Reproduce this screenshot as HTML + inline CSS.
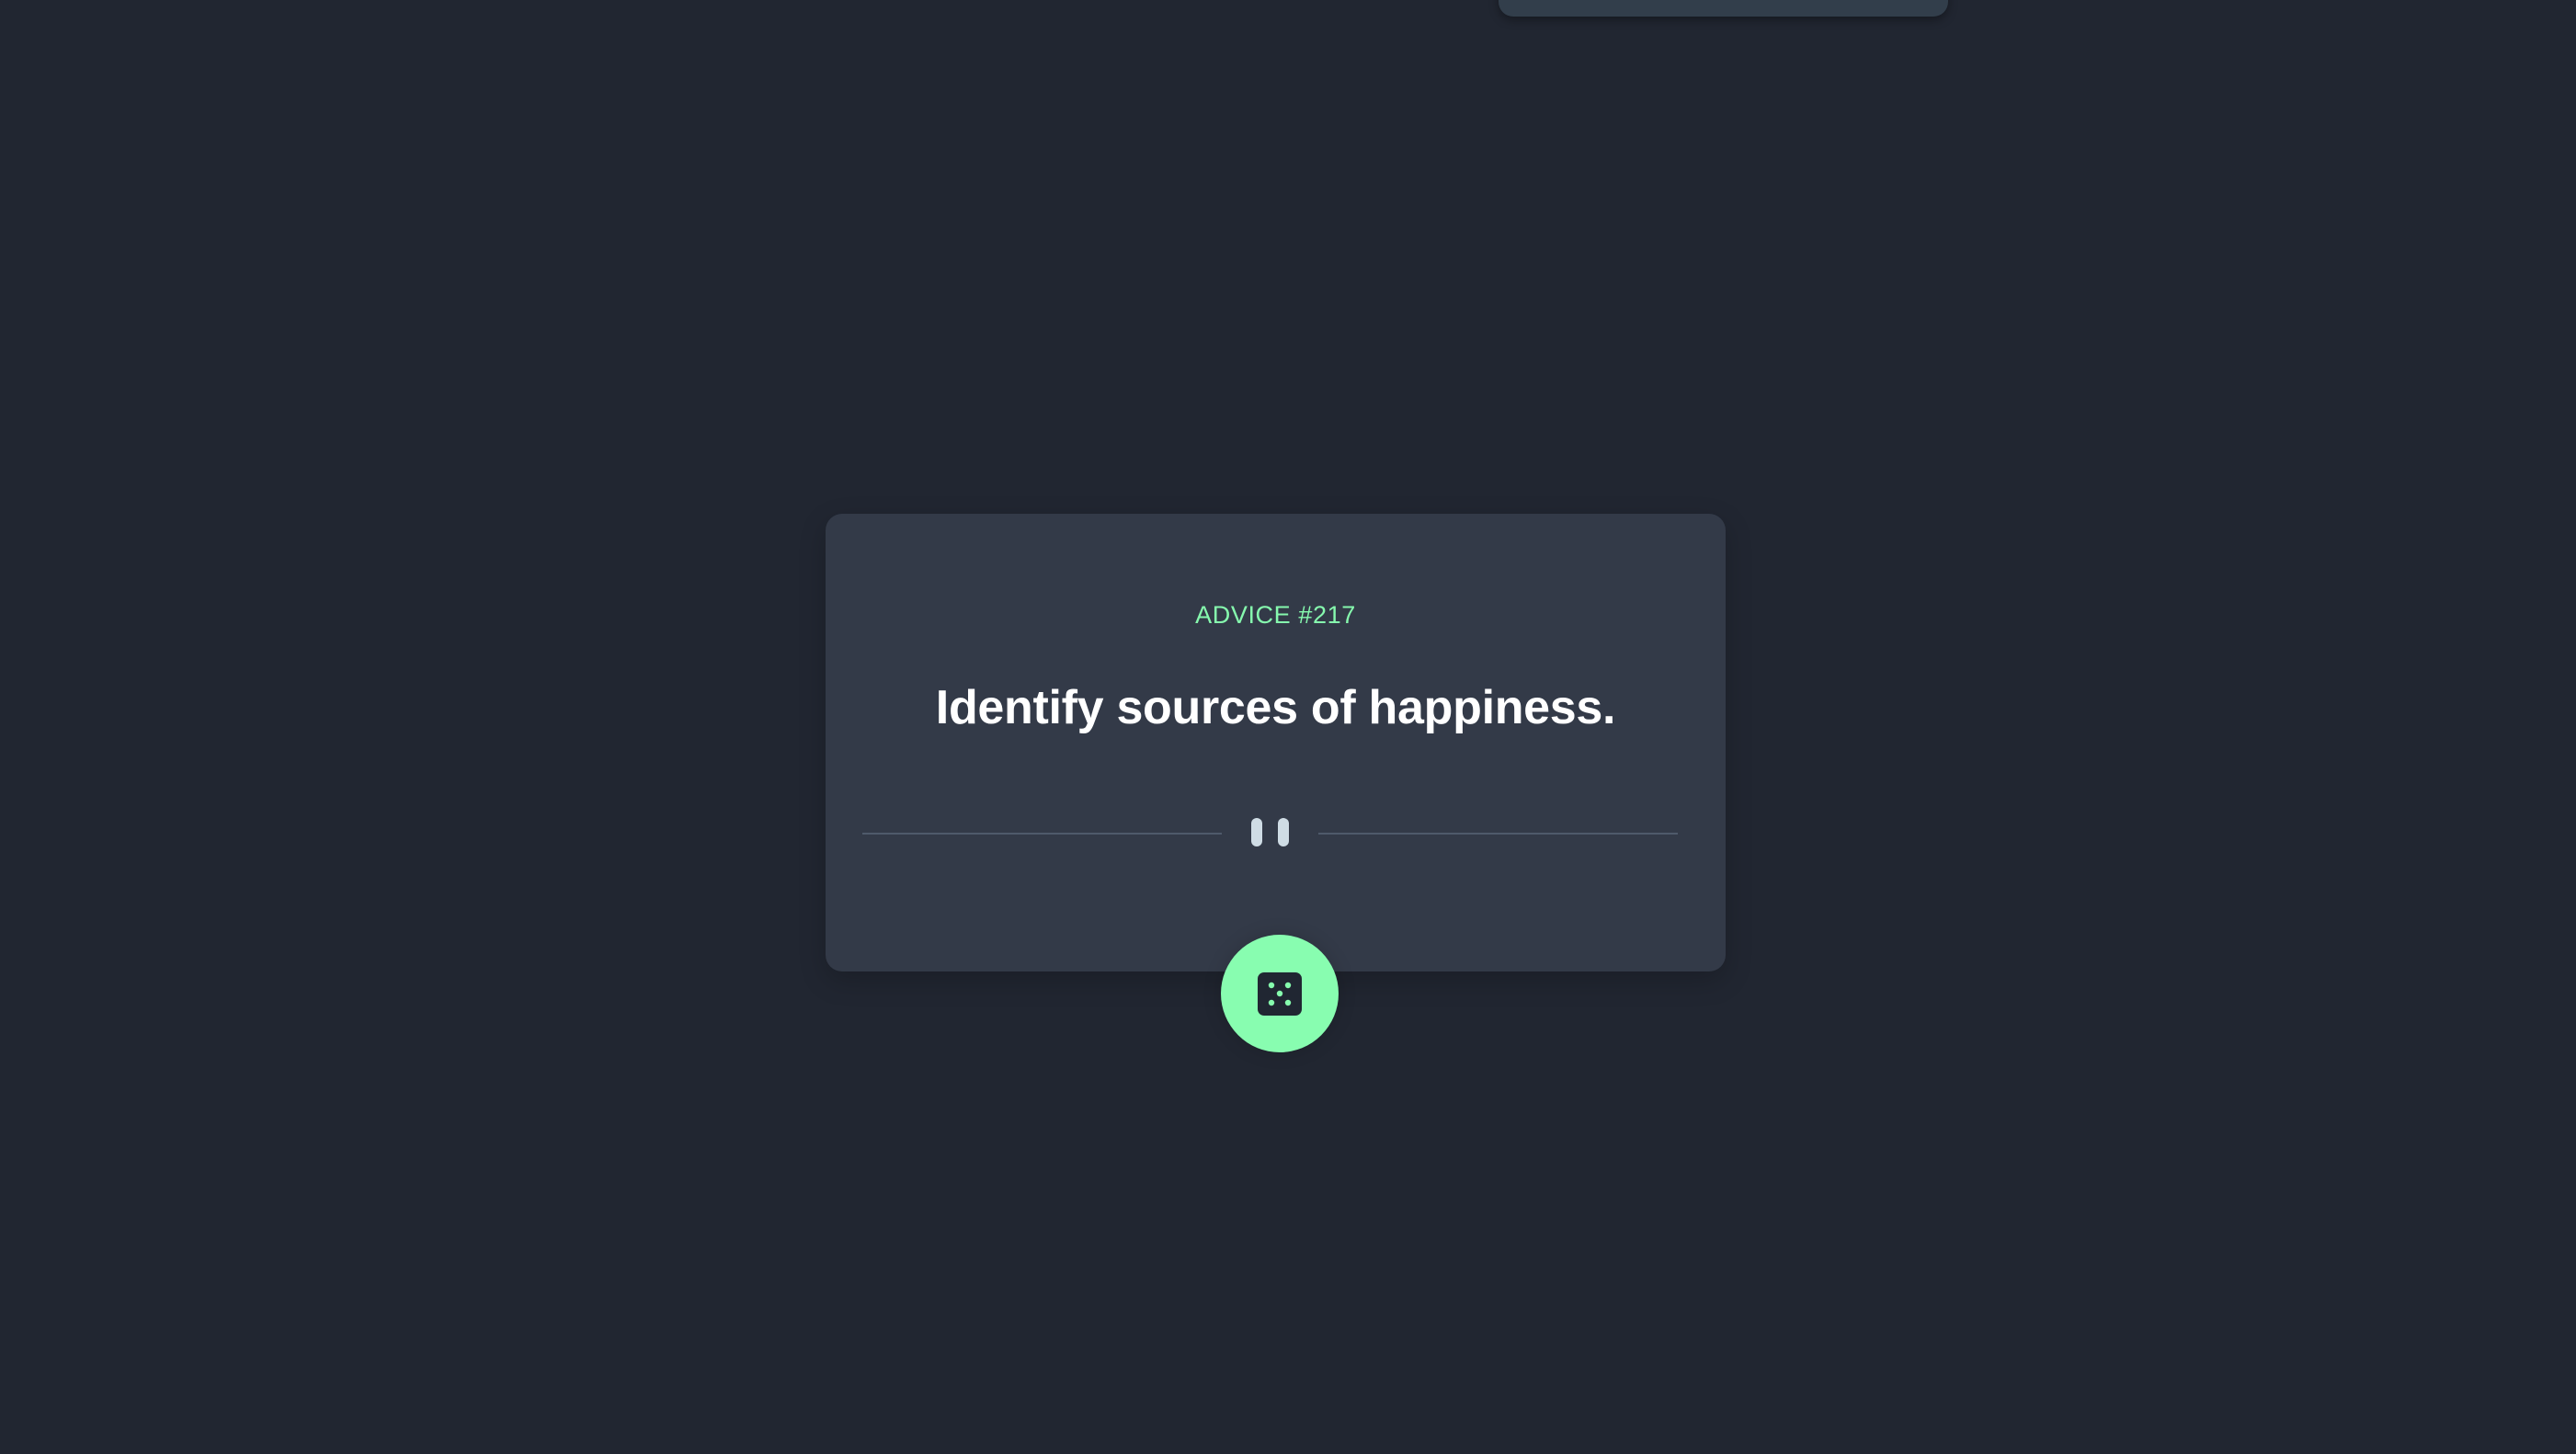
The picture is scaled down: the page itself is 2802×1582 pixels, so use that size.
<!DOCTYPE html>
<html><head><meta charset="utf-8"><style>
html,body{margin:0;padding:0;width:2802px;height:1582px;background:#212631;overflow:hidden;font-family:"Liberation Sans",sans-serif}
.top{position:absolute;left:1630px;top:-20px;width:489px;height:38px;background:#323e4b;border-radius:0 0 16px 16px;box-shadow:0 4px 10px rgba(0,0,0,.35)}
.card{position:absolute;left:898px;top:559px;width:979px;height:498px;background:#333a48;border-radius:18px;box-shadow:0 10px 30px rgba(0,0,0,.2)}
.adv{position:absolute;left:898px;width:979px;top:654px;text-align:center;font-size:27px;letter-spacing:0.6px;color:#86f9ae}
.q{position:absolute;left:898px;width:979px;top:740px;text-align:center;color:#fff;font-size:52px;font-weight:bold;letter-spacing:-0.3px}
.line{position:absolute;top:906px;height:2px;background:#4f5a6b}
.bar{position:absolute;top:890px;width:12px;height:31px;background:#cfdce5;border-radius:6px}
.btn{position:absolute;left:1328px;top:1017px;width:128px;height:128px;border-radius:50%;background:#88fdb0;box-shadow:0 0 20px rgba(0,0,0,.15)}
</style></head><body>
<div class="top"></div>
<div class="card"></div>
<div class="adv">ADVICE #217</div>
<div class="q">Identify sources of happiness.</div>
<div class="line" style="left:938px;width:391px"></div>
<div class="line" style="left:1434px;width:391px"></div>
<div class="bar" style="left:1361px"></div>
<div class="bar" style="left:1390px"></div>
<div class="btn"></div>
<svg style="position:absolute;left:0;top:0" width="2802" height="1582">
<rect x="1368" y="1058" width="48" height="47" rx="7" fill="#202632"/>
<g fill="#86fdae"><circle cx="1383" cy="1072" r="3.2"/><circle cx="1401" cy="1072" r="3.2"/><circle cx="1392" cy="1081" r="3.2"/><circle cx="1383" cy="1091" r="3.2"/><circle cx="1401" cy="1091" r="3.2"/></g>
</svg>
</body></html>
